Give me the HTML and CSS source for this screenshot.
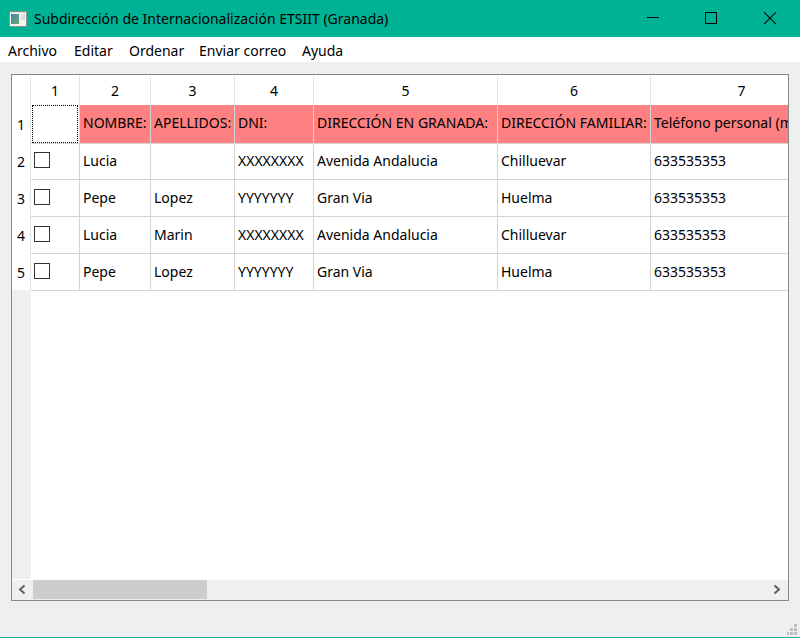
FILE: index.html
```html
<!DOCTYPE html>
<html lang="es">
<head>
<meta charset="utf-8">
<title>Subdirección de Internacionalización ETSIIT (Granada)</title>
<link rel="stylesheet" href="styles.css">
</head>
<body>
<div class="window">
<header class="titlebar">
<svg class="app-icon" width="18" height="16" viewBox="0 0 18 16"><defs><linearGradient id="g" x2="1" y2="1"><stop stop-color="#4a7fa5"/><stop offset="1" stop-color="#62b072"/></linearGradient></defs><path fill="#8b9693" d="M0 0h18v16H0z"/><path fill="#f5f5f5" d="M1 1h16v14H1z"/><path fill="#d5dad9" d="M1 1h16v1H1z"/><path fill="url(#g)" d="M2 3h8v10H2z"/><path fill="#cfd5d8" d="M12 3h1v6h-1zM14 3h2v6h-2z"/></svg>
<h1 class="title">Subdirección de Internacionalización ETSIIT (Granada)</h1>
<svg class="controls" width="130" height="13" viewBox="0 0 130 13" fill="none" stroke="#000"><path d="M0 5.5h12M58.500 .5h11v11h-11z" shape-rendering="crispEdges"/><path d="M117 .2l12 12M129 .2l-12 12" stroke-width="1.1"/></svg>
</header>
<nav class="menubar"><span class="m1">Archivo</span><span class="m2">Editar</span><span class="m3">Ordenar</span><span class="m4">Enviar correo</span><span class="m5">Ayuda</span></nav>
<main class="content">
<div class="frame">
<div class="viewport">
<div class="row head"><b></b><div>1</div><div>2</div><div>3</div><div>4</div><div>5</div><div>6</div><div>7</div></div>
<div class="row labels"><b>1</b><div class="current"></div><div>NOMBRE:</div><div>APELLIDOS:</div><div>DNI:</div><div>DIRECCIÓN EN GRANADA:</div><div>DIRECCIÓN FAMILIAR:</div><div>Teléfono personal (móvil):</div></div>
<div class="row"><b>2</b><div><i class="check"></i></div><div>Lucia</div><div></div><div class="xs">XXXXXXXX</div><div>Avenida Andalucia</div><div>Chilluevar</div><div>633535353</div></div>
<div class="row"><b>3</b><div><i class="check"></i></div><div>Pepe</div><div>Lopez</div><div class="ys">YYYYYYY</div><div>Gran Via</div><div>Huelma</div><div>633535353</div></div>
<div class="row"><b>4</b><div><i class="check"></i></div><div>Lucia</div><div>Marin</div><div class="xs">XXXXXXXX</div><div>Avenida Andalucia</div><div>Chilluevar</div><div>633535353</div></div>
<div class="row"><b>5</b><div><i class="check"></i></div><div>Pepe</div><div>Lopez</div><div class="ys">YYYYYYY</div><div>Gran Via</div><div>Huelma</div><div>633535353</div></div>
<div class="gutter"></div>
</div>
<div class="scrollbar">
<svg width="21" height="20" viewBox="0 0 21 20"><path d="M12.500 5.500L8 9.500l4.500 4" fill="none" stroke="#606060" stroke-width="2"/></svg>
<div class="thumb"></div>
<svg class="right" width="21" height="20" viewBox="0 0 21 20"><path d="M7.500 5.500L12 9.500l-4.500 4" fill="none" stroke="#606060" stroke-width="2"/></svg>
</div>
</div>
</main>
<footer class="statusbar"><svg width="10" height="11" viewBox="0 0 10 11"><path fill="#bfbfbf" d="M7 0h3v3H7zM3 4h3v3H3zM7 4h3v3H7zM0 8h2v3H0zM3 8h3v3H3zM7 8h3v3H7z"/></svg></footer>
</div>
</body>
</html>
```
FILE: styles.css
```css
* { box-sizing: border-box; }
body { margin: 0; font: 14px/20px "Noto Sans", "Open Sans", sans-serif; color: #000; }
.window { width: 800px; height: 638px; display: flex; flex-direction: column; background: #efefef; border-bottom: 1px solid #2bab95; overflow: hidden; }
.titlebar { height: 37px; flex: none; background: #00b294; display: flex; align-items: center; padding: 0 23px 0 9px; }
.app-icon { margin-right: 7px; }
.title { margin: 0; font-size: 14px; font-weight: 400; letter-spacing: 0; white-space: nowrap; }
.controls { margin-left: auto; }
.menubar { height: 25px; flex: none; background: #fff; display: flex; padding: 4px 8px 0; white-space: nowrap; }
.m1 { width: 66px; }
.m2 { width: 55px; }
.m3 { width: 70px; }
.m4 { width: 103px; }
.content { padding: 12px 11px 0; }
.frame { width: 778px; height: 527px; border: 1px solid #828790; background: #fff; display: flex; flex-direction: column; }
.viewport { height: 504px; overflow: hidden; display: flex; flex-direction: column; }
.row { display: grid; grid-template-columns: 19px 49px 71px 84px 79px 184px 153px 182px; height: 37px; flex: none; line-height: 36px; white-space: nowrap; }
.row > div { border-right: 1px solid #d4d4d4; border-bottom: 1px solid #d4d4d4; padding-left: 3px; padding-top: 1px; }
.row > b { font-weight: 400; text-align: center; border-right: 1px solid #e5e5e5; padding-top: 2px; }
.head { height: 30px; line-height: 30px; }
.head > div { padding: 1px 0 0; text-align: center; border-bottom: 0; border-color: #e5e5e5; }
.labels > div { background: #ff8080; padding-top: 0; }
.labels > .current { background: #fff; padding: 0; }
.current::before { content: ""; display: block; margin: 0 1px 0 1px; height: 36px; border: 1px dotted #000; }
.check { display: block; width: 16px; height: 16px; border: 1px solid #333; margin-top: 9px; }
.gutter { width: 19px; flex: 1; background: #efefef; }
.scrollbar { height: 20px; margin-top: 1px; background: #efefef; display: flex; }
.thumb { width: 174px; height: 19px; background: #cdcdcd; }
.right { margin-left: auto; }
.statusbar { margin-top: auto; height: 13px; padding: 0 3px 2px 0; display: flex; justify-content: flex-end; }
```
